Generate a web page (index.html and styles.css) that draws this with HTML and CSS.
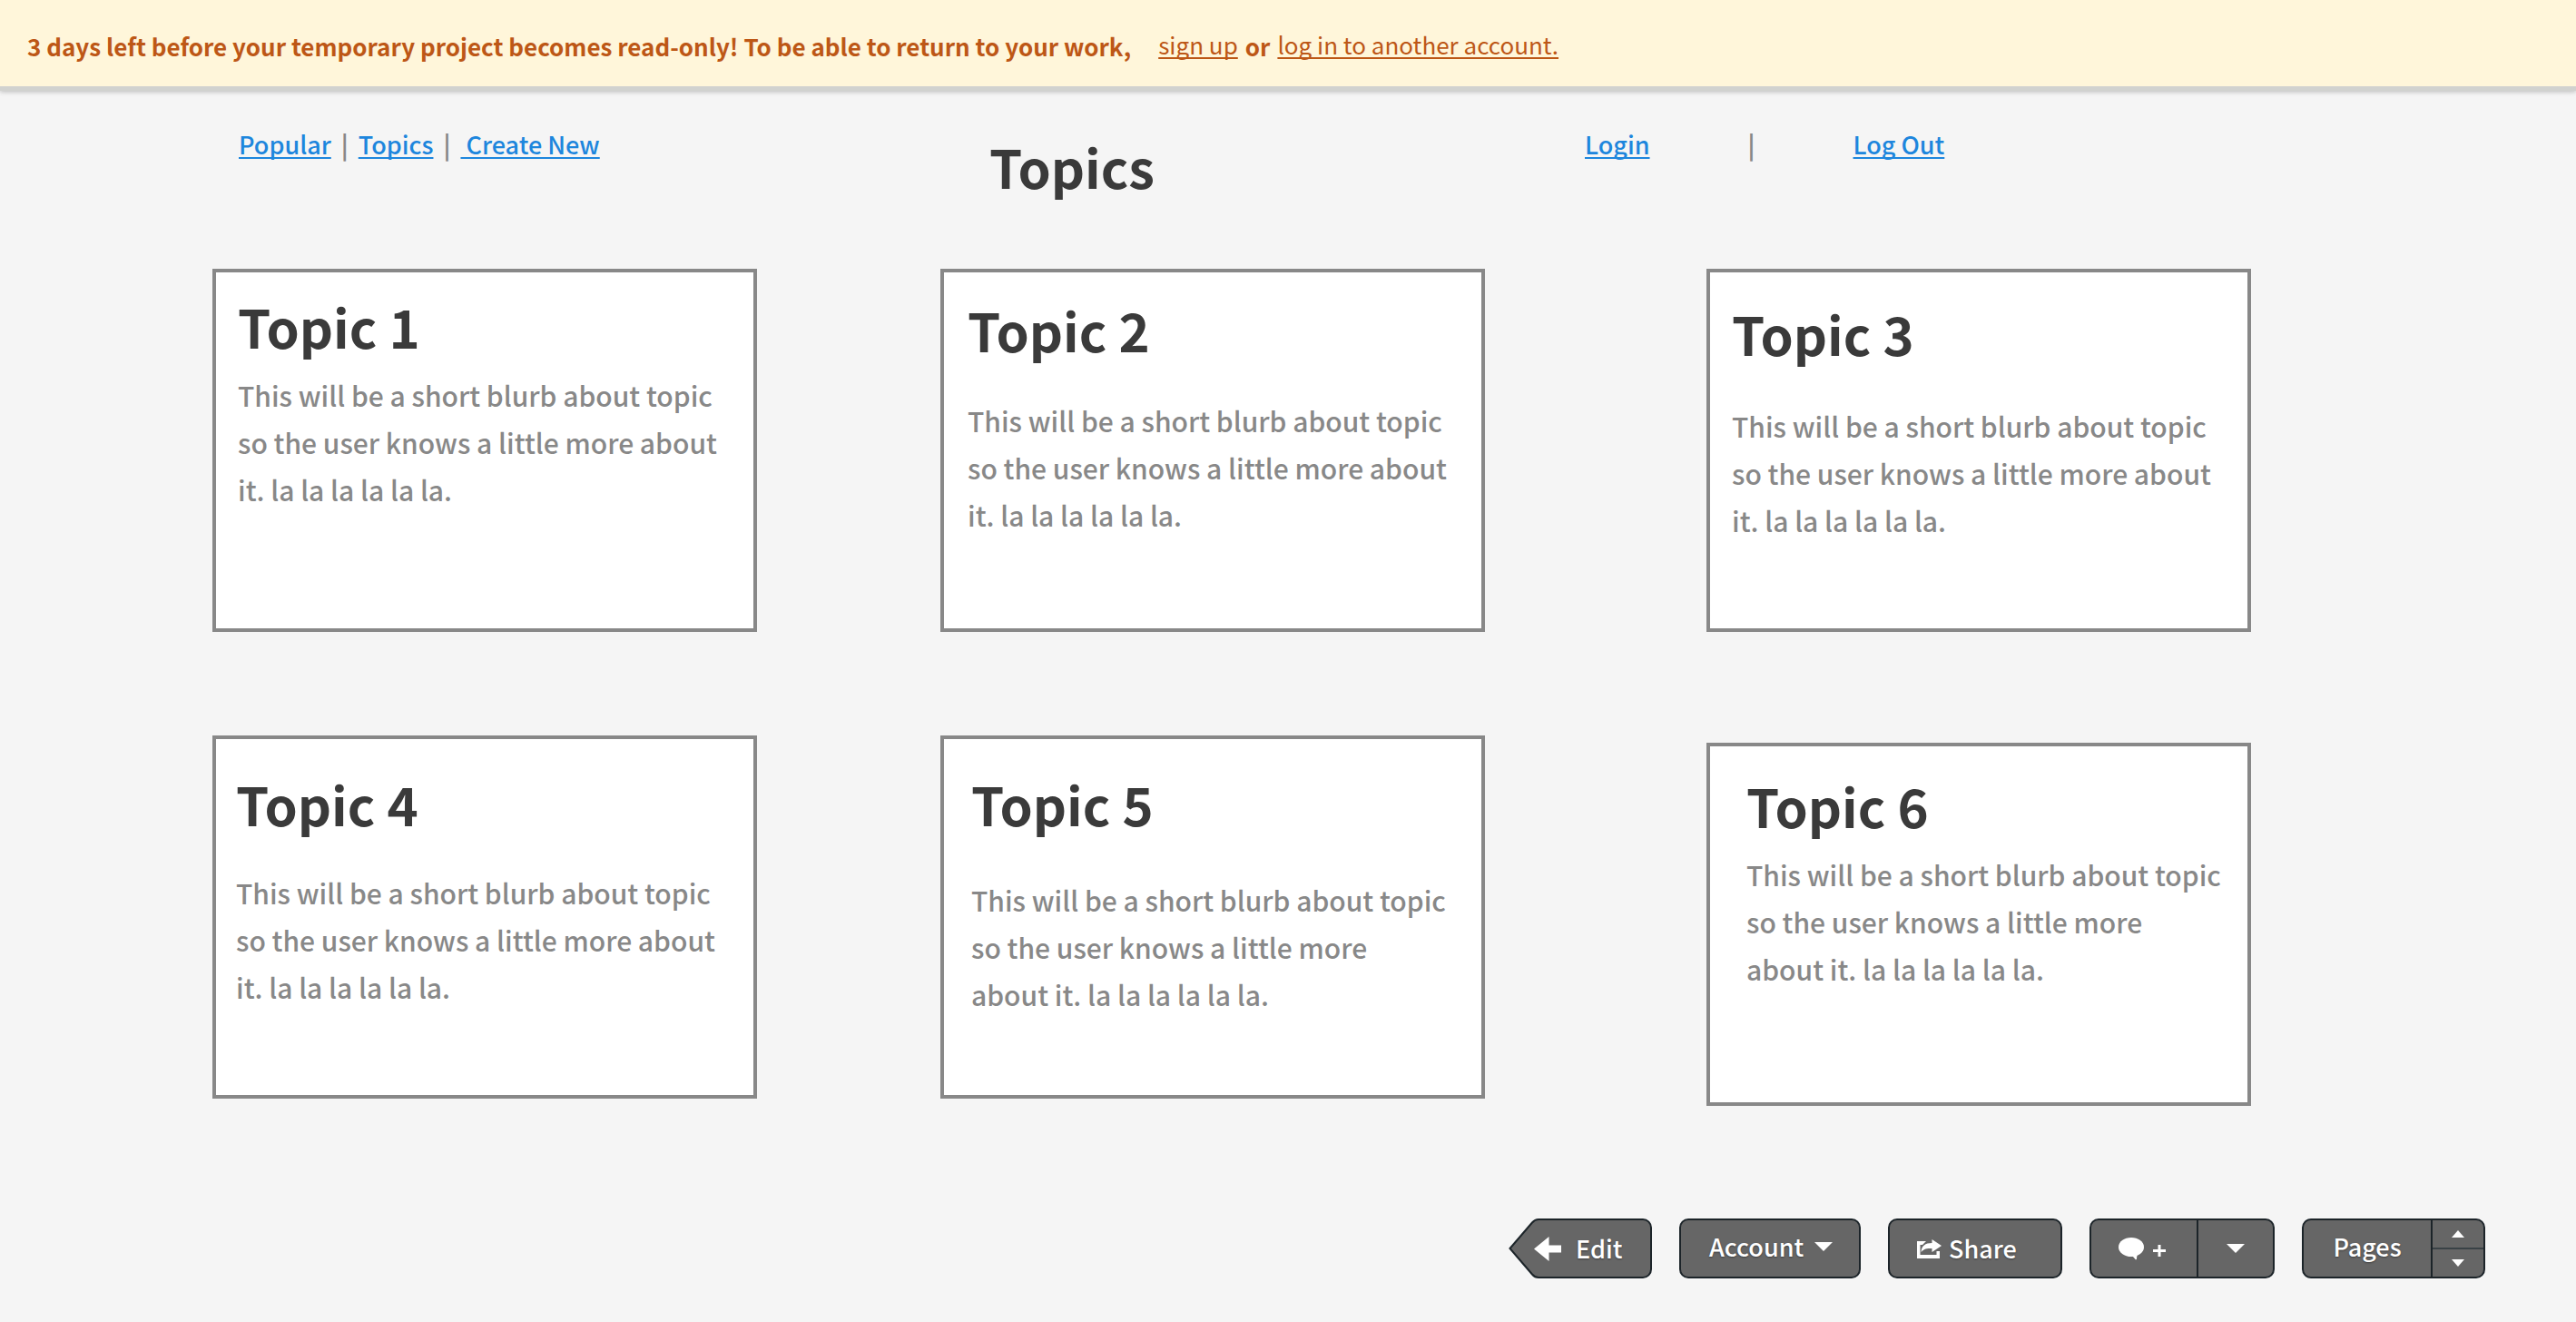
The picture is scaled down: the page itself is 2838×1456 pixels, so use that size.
FILE: index.html
```html
<!DOCTYPE html>
<html lang="en">
<head>
<meta charset="utf-8">
<title>Topics</title>
<link rel="stylesheet" href="styles.css">
</head>
<body>
<div class="notice">
  <strong>3 days left before your temporary project becomes read-only! To be able to return to your work,</strong>
  <a href="#signup">sign up</a>
  <strong>or</strong>
  <a href="#login">log in to another account.</a>
</div>

<header class="header">
  <nav class="nav">
    <a href="#popular">Popular</a>
    <span>|</span>
    <a href="#topics">Topics</a>
    <span>|</span>
    <a href="#create">&nbsp;Create New</a>
  </nav>
  <h1 class="title">Topics</h1>
  <nav class="nav nav-account">
    <a href="#login">Login</a>
    <span>|</span>
    <a href="#logout">Log Out</a>
  </nav>
</header>

<main class="topics">
  <article class="card card-1">
    <h2 class="title">Topic 1</h2>
    <p>This will be a short blurb about topic<br>so the user knows a little more about<br>it. la la la la la la.</p>
  </article>
  <article class="card card-2">
    <h2 class="title">Topic 2</h2>
    <p>This will be a short blurb about topic<br>so the user knows a little more about<br>it. la la la la la la.</p>
  </article>
  <article class="card card-3">
    <h2 class="title">Topic 3</h2>
    <p>This will be a short blurb about topic<br>so the user knows a little more about<br>it. la la la la la la.</p>
  </article>
  <article class="card card-4">
    <h2 class="title">Topic 4</h2>
    <p>This will be a short blurb about topic<br>so the user knows a little more about<br>it. la la la la la la.</p>
  </article>
  <article class="card card-5">
    <h2 class="title">Topic 5</h2>
    <p>This will be a short blurb about topic<br>so the user knows a little more<br>about it. la la la la la la.</p>
  </article>
  <article class="card card-6">
    <h2 class="title">Topic 6</h2>
    <p>This will be a short blurb about topic<br>so the user knows a little more<br>about it. la la la la la la.</p>
  </article>
</main>

<footer class="toolbar">
  <button class="edit" type="button">
    <svg class="edit-shape" width="158" height="66" viewBox="0 0 158 66"><path d="M1.5 33 26 4.500Q29 1 33 1H148a9 9 0 0 1 9 9V56a9 9 0 0 1-9 9H33Q29 65 26 61.500Z" fill="#666" stroke="#1c2429" stroke-width="2"/></svg>
    <svg class="icon" width="30" height="27" viewBox="0 0 30 27"><path d="M0 13.500 16.500 0V9.500H30V17.500H16.500V27Z" fill="#fff"/></svg>
    Edit
  </button>
  <button class="button account" type="button">
    Account
    <svg width="20" height="10" viewBox="0 0 20 10"><path d="M0 0H20L10 10Z" fill="#fff"/></svg>
  </button>
  <button class="button share" type="button">
    <svg width="27" height="21" viewBox="0 0 27 21"><path d="M10 2H0V21H25V13H21.500V17H3.500V6H6Z" fill="#fff"/><path d="M4.500 14C5 7 9 4 16.500 4V0L27 7 16.500 14V10C10 9.500 7 11 4.500 14Z" fill="#fff"/></svg>
    Share
  </button>
  <div class="group">
    <button class="comment" type="button" aria-label="Add comment">
      <svg width="52" height="25" viewBox="0 0 52 25"><ellipse cx="14" cy="10.500" rx="14" ry="10.500" fill="#fff"/><path d="M13 19Q17 21 19 24.500Q20.500 24 20 22.500L21 17Z" fill="#fff"/><path d="M38 14.500H52M45 8V21" stroke="#fff" stroke-width="3"/></svg>
    </button>
    <button class="more" type="button" aria-label="Comment options">
      <svg width="20" height="10" viewBox="0 0 20 10"><path d="M0 0H20L10 10Z" fill="#fff"/></svg>
    </button>
  </div>
  <div class="group">
    <button class="pages" type="button">Pages</button>
    <div class="stepper">
      <button type="button" aria-label="Previous page"><svg width="14" height="8" viewBox="0 0 14 8"><path d="M0 8H14L7 0Z" fill="#fff"/></svg></button>
      <button type="button" aria-label="Next page"><svg width="14" height="8" viewBox="0 0 14 8"><path d="M0 0H14L7 8Z" fill="#fff"/></svg></button>
    </div>
  </div>
</footer>
</body>
</html>
```
FILE: styles.css
```css
* {
  box-sizing: border-box;
}

body {
  margin: 0;
  min-height: 100vh;
  display: flex;
  flex-direction: column;
  background: #f5f5f5;
  color: #888;
  font-family: "Noto Sans CJK SC", "Noto Sans", sans-serif;
  font-size: 27px;
  font-weight: 500;
  line-height: 40px;
}

h1, h2, p {
  margin: 0;
}

button {
  margin: 0;
  padding: 0;
  border: 0;
  background: none;
  color: #fff;
  font: inherit;
  text-shadow: 0 1px 2px rgba(0, 0, 0, 0.4);
  cursor: pointer;
}

svg {
  display: block;
  flex: none;
}

/* Expiry notice */
.notice {
  display: flex;
  align-items: center;
  gap: 8px;
  min-height: 100px;
  padding: 7px 30px 0;
  background: #fff6da;
  border-bottom: 5px solid #d1d2cf;
  box-shadow: 0 1px 5px rgba(0, 0, 0, 0.25);
  color: #bd5716;
  font-size: 26px;
}

.notice strong {
  font-weight: 700;
}

.notice a {
  color: inherit;
  font-weight: 400;
  text-decoration-thickness: 2px;
  text-decoration-skip-ink: none;
  text-underline-offset: 3px;
  padding-bottom: 4px;
}

.notice strong:first-child {
  margin-right: 22px;
}

/* Page header */
.header {
  display: grid;
  grid-template-columns: 827fr 656fr 1092fr;
  padding: 39px 0 0 263px;
}

.nav {
  display: flex;
  gap: 11px;
}

.nav-account {
  gap: 108px;
}

.nav a {
  color: #1d86dd;
  text-decoration-thickness: 2px;
  text-decoration-skip-ink: none;
  text-underline-offset: 3px;
}

.nav span {
  font-weight: 700;
}

.title {
  color: #3a3a3a;
  font-size: 58px;
  font-weight: 700;
  line-height: 64px;
}

.header .title {
  margin-top: 12px;
}

/* Topic cards */
.topics {
  display: grid;
  grid-template-columns: 600fr 202fr 600fr 244fr 600fr;
  row-gap: 114px;
  align-items: start;
  padding: 81px 358px 40px 234px;
}

.card {
  min-height: 400px;
  background: #fff;
  border: 4px solid #888;
  font-size: 30px;
  line-height: 52px;
}

.card:nth-child(3n + 1) {
  grid-column: 1;
}

.card:nth-child(3n + 2) {
  grid-column: 3;
}

.card:nth-child(3n) {
  grid-column: 5;
}

.card p {
  margin-top: 42px;
}

.card-1 {
  padding: 27px 0 0 24px;
}

.card-2 {
  padding: 31px 0 0 26px;
}

.card-3 {
  padding: 35px 0 0 24px;
}

.card-4 {
  padding: 39px 0 0 22px;
}

.card-5 {
  padding: 39px 0 0 30px;
}

.card-6 {
  margin-top: 8px;
  padding: 33px 0 0 40px;
}

.card-1 p,
.card-6 p {
  margin-top: 18px;
}

.card-3 p {
  margin-top: 44px;
}

.card-4 p {
  margin-top: 40px;
}

.card-5 p {
  margin-top: 48px;
}

/* Bottom toolbar */
.toolbar {
  display: flex;
  justify-content: flex-end;
  gap: 30px;
  margin-top: auto;
  padding: 0 100px 48px;
}

.button,
.group {
  display: flex;
  align-items: center;
  height: 66px;
  background: #666;
  border: 2px solid #1c2429;
  border-radius: 10px;
}

.edit {
  position: relative;
  z-index: 0;
  display: flex;
  align-items: center;
  gap: 16px;
  width: 158px;
  height: 66px;
  padding-left: 28px;
}

.edit-shape {
  position: absolute;
  inset: 0;
  z-index: -1;
}

.account {
  gap: 12px;
  width: 200px;
  padding: 0 0 4px 31px;
}

.share {
  gap: 8px;
  width: 192px;
  padding-left: 30px;
}

.group button {
  display: flex;
  align-items: center;
  justify-content: center;
}

.group .comment {
  width: 116px;
  height: 62px;
  padding-right: 4px;
}

.more {
  width: 84px;
  height: 62px;
  border-left: 2px solid #1c2429;
}

.pages {
  width: 140px;
  height: 62px;
  padding-bottom: 4px;
}

.stepper {
  display: grid;
  width: 58px;
  height: 62px;
  border-left: 2px solid #1c2429;
}

.stepper button + button {
  border-top: 2px solid #3a4246;
}
```
